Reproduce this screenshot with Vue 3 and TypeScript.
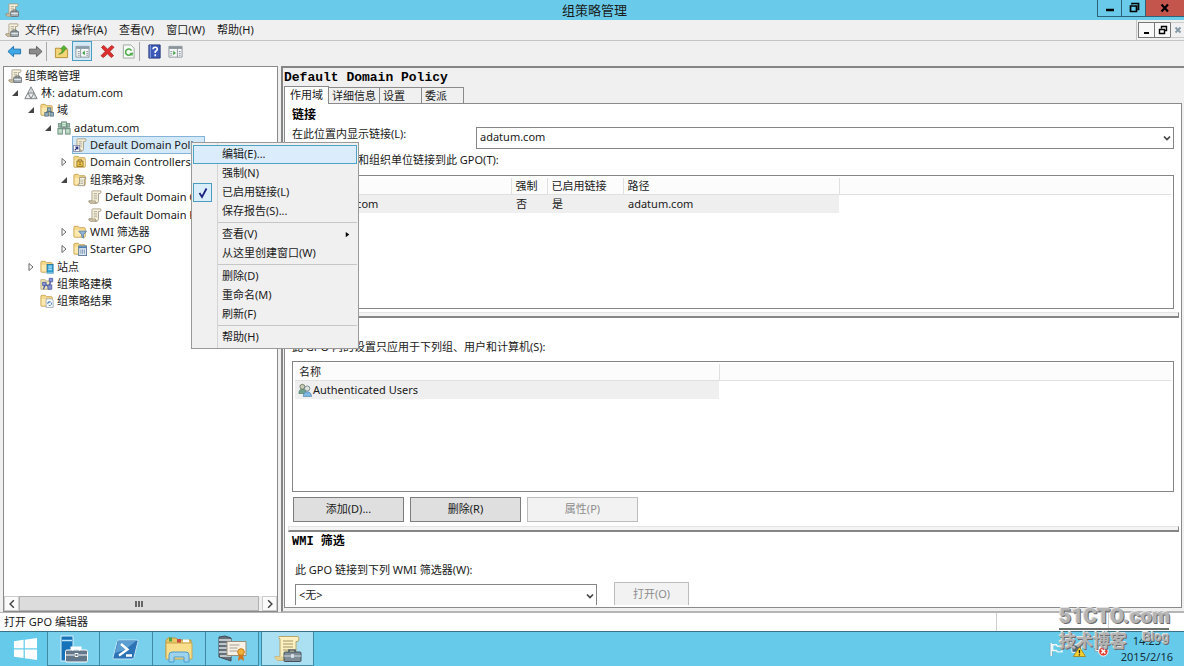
<script setup lang="ts">
import { ref } from 'vue'

interface TreeNode {
  label: string
  icon: string
  level: number
  state?: 'open' | 'closed'
  selected?: boolean
}

interface MenuEntry {
  label?: string
  active?: boolean
  checked?: boolean
  submenu?: boolean
}

const menus = ['文件(F)', '操作(A)', '查看(V)', '窗口(W)', '帮助(H)']

const nodes: TreeNode[] = [
  { label: '组策略管理', icon: 'gpmc', level: 0 },
  { label: '林: adatum.com', icon: 'forest', level: 1, state: 'open' },
  { label: '域', icon: 'domains', level: 2, state: 'open' },
  { label: 'adatum.com', icon: 'domain', level: 3, state: 'open' },
  { label: 'Default Domain Policy', icon: 'link', level: 4, selected: true },
  { label: 'Domain Controllers', icon: 'ou', level: 4, state: 'closed' },
  { label: '组策略对象', icon: 'objects', level: 4, state: 'open' },
  { label: 'Default Domain Controllers Policy', icon: 'scroll', level: 5 },
  { label: 'Default Domain Policy', icon: 'scroll', level: 5 },
  { label: 'WMI 筛选器', icon: 'wmi', level: 4, state: 'closed' },
  { label: 'Starter GPO', icon: 'starter', level: 4, state: 'closed' },
  { label: '站点', icon: 'sites', level: 2, state: 'closed' },
  { label: '组策略建模', icon: 'modeling', level: 2 },
  { label: '组策略结果', icon: 'results', level: 2 },
]

const contextMenu: MenuEntry[] = [
  { label: '编辑(E)...', active: true },
  { label: '强制(N)' },
  { label: '已启用链接(L)', checked: true },
  { label: '保存报告(S)...' },
  {},
  { label: '查看(V)', submenu: true },
  { label: '从这里创建窗口(W)' },
  {},
  { label: '删除(D)' },
  { label: '重命名(M)' },
  { label: '刷新(F)' },
  {},
  { label: '帮助(H)' },
]

const tabs = ['作用域', '详细信息', '设置', '委派']
const activeTab = ref(0)
const linkLocation = ref('adatum.com')
const wmiFilter = ref('<无>')

const taskItems = [
  { id: 'server', name: '服务器管理器' },
  { id: 'shell', name: 'PowerShell' },
  { id: 'explorer', name: '文件资源管理器' },
  { id: 'tools', name: '管理工具' },
  { id: 'policy', name: '组策略管理' },
]
</script>

<template>
  <div class="desktop">
    <svg class="defs" aria-hidden="true">
      <symbol id="scroll" viewBox="0 0 16 16">
        <path d="M5 1h9.500q1 1.500-.5 3H12v8.500q0 2.500-2.500 2.500H3q-2-.5-2-2.500h3.500V3Q4 1.500 5 1z" fill="#f6f0dc" stroke="#a39b84" />
        <path d="M1 12.500h7.500V14q.5 1 1.500 1H3q-2-.5-2-2.500z" fill="#d9cfae" stroke="#968d73" stroke-width=".8" />
        <path d="M6.500 4h4M6.500 6h4M6.500 8h4M6.500 10h4" stroke="#aaa690" stroke-width=".9" />
      </symbol>
      <symbol id="gpmc" viewBox="0 0 16 16">
        <use href="#scroll" />
        <path d="M9 9.500V8h4v1.500" fill="none" stroke="#5f686c" />
        <rect x="6.500" y="9.500" width="9" height="6" rx=".8" fill="#a3acb0" stroke="#666f73" />
        <path d="M7 12h8M11 11v2" stroke="#e8ecee" />
      </symbol>
      <symbol id="forest" viewBox="0 0 16 16">
        <path d="M8 1 15 14.500H1zM4.500 8h7L8 14.500z" fill="#eceeef" stroke="#6d7377" stroke-linejoin="round" />
        <path d="M8 1v7M4.500 8 8 14M11.500 8 13 14" stroke="#9aa0a4" stroke-width=".8" fill="none" />
      </symbol>
      <symbol id="folder" viewBox="0 0 16 16">
        <path d="M1 2.500q0-1 1-1h4l1.500 1.500H13q1 0 1 1V13q0 1-1 1H2q-1 0-1-1z" fill="#f3d88a" stroke="#c29c46" stroke-width=".9" />
        <path d="M2 5.500h11.500V13H2z" fill="#fbe9b0" />
      </symbol>
      <symbol id="domain" viewBox="0 0 16 16">
        <path d="M8 5v5M3.500 10V8h9v2" stroke="#5f6b6b" fill="none" />
        <g fill="#9fc3ae" stroke="#6a8a7e" stroke-width=".9">
          <rect x="5" y="1" width="6" height="6" />
          <rect x="1" y="8.500" width="5.500" height="6.500" />
          <rect x="9.500" y="8.500" width="5.500" height="6.500" />
          <rect x="1.500" y="3" width="3" height="4" />
          <rect x="11.500" y="3" width="3" height="4" />
        </g>
        <path d="M6 3h4M6 5h4M2 10.500h3.500M10.500 10.500h3.500M2 12.500h3.500M10.500 12.500h3.500" stroke="#e2f2e2" />
      </symbol>
      <symbol id="domains" viewBox="0 0 16 16">
        <use href="#folder" />
        <path d="M10.500 8v2M7.500 11.500V10h6v1.500" stroke="#456" fill="none" />
        <g fill="#8eaebf" stroke="#4a6678" stroke-width=".8">
          <rect x="8.500" y="5.500" width="4" height="4" />
          <rect x="5.500" y="11" width="4" height="4" />
          <rect x="11.500" y="11" width="4" height="4" />
        </g>
      </symbol>
      <symbol id="link" viewBox="0 0 16 16">
        <use href="#scroll" />
        <rect x=".5" y="8.500" width="7" height="7" fill="#fff" stroke="#8a8fa8" />
        <path d="M2 14 5 11M2.800 10.500h2.700v2.700" stroke="#24307e" stroke-width="1.300" fill="none" />
      </symbol>
      <symbol id="ou" viewBox="0 0 16 16">
        <use href="#folder" />
        <rect x="4.500" y="7" width="7" height="6" fill="#f4cf52" stroke="#8e6c1e" />
        <path d="M6 7V5.500h4V7M6.500 9h3M6.500 11h3" stroke="#8e6c1e" fill="none" />
      </symbol>
      <symbol id="objects" viewBox="0 0 16 16">
        <use href="#folder" />
        <path d="M7.500 5h7v2H13v7.500H6v-2h1.500z" fill="#f6f2e2" stroke="#8f8a78" stroke-width=".9" />
        <path d="M8.500 8h3M8.500 10h3M8.500 12h3" stroke="#a5a08e" stroke-width=".8" />
      </symbol>
      <symbol id="wmi" viewBox="0 0 16 16">
        <use href="#folder" />
        <path d="M6.500 7h9L12 11.200V15l-2-1.500v-2.300z" fill="#8fb4d4" stroke="#5479a0" stroke-width=".9" />
      </symbol>
      <symbol id="starter" viewBox="0 0 16 16">
        <use href="#folder" />
        <rect x="6.500" y="4.500" width="9" height="11" fill="#dfe9f3" stroke="#55708f" />
        <path d="M6.500 6h9" stroke="#4b7db5" stroke-width="2" />
        <path d="M9 8.500v5M11 8.500v5M13 8.500v5" stroke="#7390af" />
      </symbol>
      <symbol id="sites" viewBox="0 0 16 16">
        <use href="#folder" />
        <rect x="8" y="5" width="7" height="10.500" fill="#2fa0d4" stroke="#14668f" stroke-width=".8" />
        <path d="M9.500 7h4M9.500 9h4M9.500 11h4M6.500 15h9" stroke="#d3f1ff" />
      </symbol>
      <symbol id="modeling" viewBox="0 0 16 16">
        <path d="M1 3h5l1 1.500h5V14H1z" fill="#f2e5b4" stroke="#a99b6d" stroke-width=".8" />
        <path d="M4 14 6 8l4 3 3-8" stroke="#4c5cab" stroke-width="1.500" fill="none" />
        <path d="M3 6h4v4H3zM10.500 1.500h4v4h-4zM9 9h4.500v5H9z" fill="#8795cf" stroke="#3c4d9d" stroke-width=".8" />
      </symbol>
      <symbol id="results" viewBox="0 0 16 16">
        <use href="#folder" />
        <path d="M7 5.500h6l2 2v8H7z" fill="#f8fafc" stroke="#8996a2" stroke-width=".8" />
        <path d="M9 10a2.200 2.200 0 1 1 1 3M9 11.500V9.500h2" stroke="#3b78b5" fill="none" />
      </symbol>
      <symbol id="users" viewBox="0 0 16 16">
        <path d="M1 12q0-5 4-5t4 5z" fill="#6fa38d" stroke="#3f6f5c" stroke-width=".7" />
        <circle cx="5" cy="4.300" r="2.800" fill="#c8ccb5" stroke="#54604c" stroke-width=".8" />
        <path d="M6 15.500q0-5.500 4.500-5.500t5 5.500z" fill="#7db6df" stroke="#3d76a5" stroke-width=".7" />
        <circle cx="10.500" cy="6.300" r="3" fill="#dfe3dd" stroke="#556d79" stroke-width=".8" />
      </symbol>
    </svg>

    <header class="titlebar">
      <svg class="app-icon"><use href="#gpmc" /></svg>
      <h1>组策略管理</h1>
      <div class="caption">
        <button type="button" aria-label="最小化"><svg viewBox="0 0 12 12"><path d="M2 8h8" stroke="#000" stroke-width="2.500" /></svg></button>
        <button type="button" aria-label="还原"><svg viewBox="0 0 12 12"><path d="M4 2.500V1.500h6.500v6H9.500M2.500 4h6v5.500h-6z" fill="none" stroke="#000" stroke-width="1.700" /></svg></button>
        <button type="button" class="close" aria-label="关闭"><svg viewBox="0 0 12 12"><path d="M2.500 2.500 9 9.500M9 2.500 2.500 9.500" stroke="#000" stroke-width="2.200" /></svg></button>
      </div>
    </header>

    <nav class="menubar">
      <svg class="app-icon"><use href="#gpmc" /></svg>
      <button v-for="m in menus" :key="m" type="button">{{ m }}</button>
      <div class="mdi">
        <button type="button" aria-label="最小化子窗口"><svg viewBox="0 0 12 12"><path d="M3 9h5" stroke="#000" stroke-width="2" /></svg></button>
        <button type="button" aria-label="还原子窗口"><svg viewBox="0 0 12 12"><path d="M4.500 4.500v-2H9.500v4H8M2.500 5.500H7.500V9.500h-5z" fill="none" stroke="#000" stroke-width="1.400" /></svg></button>
        <button type="button" class="mdi-close" aria-label="关闭子窗口"><svg viewBox="0 0 12 12"><path d="M3.500 3.500 8.500 8.500M8.500 3.500 3.500 8.500" stroke="#8499a5" stroke-width="1.800" /></svg></button>
      </div>
    </nav>

    <div class="toolbar" role="toolbar" aria-label="工具">
      <button type="button" aria-label="后退"><svg viewBox="0 0 16 16"><path d="M1 8 7 2.500V5.500h7.500v5H7v3z" fill="#3fa9e8" stroke="#1b70ae" stroke-linejoin="round" /></svg></button>
      <button type="button" aria-label="前进"><svg viewBox="0 0 16 16"><path d="M15 8 9 2.500V5.500H1.500v5H9v3z" fill="#8b8b8b" stroke="#5f5f5f" stroke-linejoin="round" /></svg></button>
      <span class="divider"></span>
      <button type="button" aria-label="上一级"><svg viewBox="0 0 16 16"><path d="M1.500 4.500h5L8 6h6.500v8.500h-13z" fill="#f3d578" stroke="#b38f34" /><path d="M5 11q4-1 4-6H7l3.500-3.500L14 5h-2.300Q11 10 5 11z" fill="#56b52f" stroke="#37801c" stroke-width=".6" /></svg></button>
      <button type="button" class="pressed" aria-label="显示控制台树"><svg viewBox="0 0 16 16"><path d="M1 2.500h14v11.500H1z" fill="#f7f9fa" stroke="#8a949b" /><path d="M1 4h14" stroke="#8a9daa" stroke-width="2.500" /><path d="M6 5v9" stroke="#8a949b" /><path d="M3 8h2M3 10h2M3 12h2M12 8h2M12 10h2M12 12h2" stroke="#8a949b" /><path d="M10.500 7v5L7.500 9.500z" fill="#48a54b" /></svg></button>
      <button type="button" class="delete" aria-label="删除"><svg viewBox="0 0 16 16"><path d="M1.500 3.500 4 1.500l4 4 4.500-4L15 3.500 10.500 8l4 4.500L12 14.500 8 10.500 3.500 14.500 1 12.500 5.500 8z" fill="#dc3030" stroke="#a31717" stroke-width=".7" /></svg></button>
      <button type="button" aria-label="刷新"><svg viewBox="0 0 16 16"><path d="M2.500 1h8L14 4.500V15H2.500z" fill="#f7faf6" stroke="#9ba79b" /><path d="M10.800 11A3.400 3.400 0 1 1 11.200 7" fill="none" stroke="#4dab48" stroke-width="1.600" /><path d="m9 9.500 4-.5-1 4z" fill="#4dab48" /></svg></button>
      <span class="divider"></span>
      <button type="button" aria-label="帮助"><svg viewBox="0 0 16 16"><path d="M2 1h12v14H2z" fill="#3c5bb8" stroke="#223879" /><path d="M3.500 1v14" stroke="#8fa5e2" /><path d="M6.500 5.700Q6.500 3.500 8.700 3.500T11 5.600Q11 7 8.800 8V9.500M8.800 11v2" fill="none" stroke="#fff" stroke-width="1.700" /></svg></button>
      <button type="button" aria-label="显示操作窗格"><svg viewBox="0 0 16 16"><path d="M1 2.500h14v11.500H1z" fill="#f7f9fa" stroke="#8a949b" /><path d="M1 4h14" stroke="#8a949b" stroke-width="2.500" /><path d="M10 5v9" stroke="#8a949b" /><path d="M2.500 8h2M2.500 10h2M2.500 12h2M11.500 8h2M11.500 10h2M11.500 12h2" stroke="#8a949b" /><path d="M5.500 7v5l3-2.500z" fill="#48a54b" /></svg></button>
    </div>

    <main class="workspace">
      <section class="tree-pane">
        <ul class="tree" role="tree">
          <li v-for="(n, i) in nodes" :key="i" role="treeitem" :aria-selected="!!n.selected" :class="['level-' + n.level, { selected: n.selected }]">
            <span v-if="n.level > 0" class="twisty">
              <svg v-if="n.state === 'open'" viewBox="0 0 8 8"><path d="M7 1v6H1z" fill="#444" /></svg>
              <svg v-else-if="n.state === 'closed'" viewBox="0 0 8 8"><path d="M2 .5v7L6 4z" fill="#fff" stroke="#666" /></svg>
            </span>
            <span class="node"><svg><use :href="'#' + n.icon" /></svg>{{ n.label }}</span>
          </li>
        </ul>
        <div class="scrollbar">
          <button type="button" aria-label="向左滚动"><svg viewBox="0 0 8 8"><path d="M5.500 1 2.500 4l3 3" fill="none" stroke="#444" stroke-width="1.200" /></svg></button>
          <div class="thumb"><i></i><i></i><i></i></div>
          <button type="button" aria-label="向右滚动"><svg viewBox="0 0 8 8"><path d="m2.500 1 3 3-3 3" fill="none" stroke="#444" stroke-width="1.200" /></svg></button>
        </div>
      </section>

      <section class="details">
        <h2 class="policy-name">Default Domain Policy</h2>
        <div class="tabs" role="tablist">
          <button v-for="(t, i) in tabs" :key="t" type="button" role="tab" :aria-selected="activeTab === i" :class="{ current: activeTab === i }" @click="activeTab = i">{{ t }}</button>
        </div>
        <div class="page" role="tabpanel">
          <div class="page-body">
            <h3>链接</h3>
            <div class="location">
              <label for="location">在此位置内显示链接(L):</label>
              <div class="combo">
                <select id="location" v-model="linkLocation"><option>adatum.com</option></select>
                <svg viewBox="0 0 8 8"><path d="m1 2.500 3 3 3-3" fill="none" stroke="#444" stroke-width="1.700" /></svg>
              </div>
            </div>
            <p class="links-caption">下列站点、域和组织单位链接到此 GPO(T):</p>
            <div class="list links">
              <table>
                <thead>
                  <tr><th class="c-loc">位置</th><th class="c-force">强制</th><th class="c-on">已启用链接</th><th class="c-path">路径</th><th></th></tr>
                </thead>
                <tbody>
                  <tr><td class="item"><svg><use href="#domain" /></svg>adatum.com</td><td>否</td><td>是</td><td>adatum.com</td><td class="rest"></td></tr>
                </tbody>
              </table>
            </div>
            <hr />
            <h3>安全筛选</h3>
            <p class="security-caption">此 GPO 内的设置只应用于下列组、用户和计算机(S):</p>
            <div class="list members">
              <table>
                <thead>
                  <tr><th class="c-name">名称</th><th></th></tr>
                </thead>
                <tbody>
                  <tr><td class="item"><svg><use href="#users" /></svg>Authenticated Users</td><td class="rest"></td></tr>
                </tbody>
              </table>
            </div>
            <div class="actions">
              <button type="button">添加(D)...</button>
              <button type="button">删除(R)</button>
              <button type="button" disabled>属性(P)</button>
            </div>
            <hr />
            <h3>WMI 筛选</h3>
            <label class="wmi-caption" for="wmi-filter">此 GPO 链接到下列 WMI 筛选器(W):</label>
            <div class="wmi-row">
              <div class="combo">
                <select id="wmi-filter" v-model="wmiFilter"><option>&lt;无&gt;</option></select>
                <svg viewBox="0 0 8 8"><path d="m1 2.500 3 3 3-3" fill="none" stroke="#444" stroke-width="1.700" /></svg>
              </div>
              <button type="button" disabled>打开(O)</button>
            </div>
          </div>
        </div>
      </section>
    </main>

    <footer class="statusbar"><span>打开 GPO 编辑器</span><span></span><span></span></footer>

    <div class="taskbar">
      <button type="button" class="start" aria-label="开始"><svg viewBox="0 0 26 24"><path d="M1 4 11 2.500v8.800H1zM12.300 2.300 25 .5v10.800H12.300zM1 12.600h10v8.800L1 20zM12.300 12.600H25v10.900l-12.700-1.800z" fill="#fff" /></svg></button>
      <button v-for="t in taskItems" :key="t.id" type="button" :class="['task', { running: t.id === 'policy' }]" :aria-label="t.name">
        <svg v-if="t.id === 'server'" viewBox="0 0 30 28"><path d="M2 1h12v25H2z" fill="#1673b9" stroke="#d8f2fc" /><path d="M3 5.500h10" stroke="#bfe6fa" stroke-width="1.500" /><path d="M13 15.500V13h8v2.500" fill="none" stroke="#fff" stroke-width="3" /><rect x="6.500" y="15" width="22" height="12" rx="1.500" fill="#62778a" stroke="#fff" /><path d="M13.500 15.500V13.500h7v2M7 20h8m5 0h8M16 18.500h3v3h-3z" stroke="#fff" fill="none" /></svg>
        <svg v-else-if="t.id === 'shell'" viewBox="0 0 30 28"><path d="M8 5h18q1.500 0 1 1.500l-4 16Q22.500 24 21 24H3q-1.500 0-1-1.500l4-16Q6.500 5 8 5z" fill="#2c73b5" stroke="#bfe3f6" /><path d="M7 6h18L14 15 4 18z" fill="#5b9ed2" /><path d="m10 9 6.500 5.500L8 20.500M15 20.500h6" stroke="#fff" stroke-width="2.300" fill="none" /></svg>
        <svg v-else-if="t.id === 'explorer'" viewBox="0 0 30 28"><path d="M2 5.500 4 3h8l2 2h13v17H2z" fill="#e9c765" stroke="#b99642" /><path d="M5 2.500h3v4H5z" fill="#51a544" /><path d="M13 4h4v4h-4z" fill="#cd4b3a" /><path d="M19 4.500h6v3h-6z" fill="#fff" /><path d="M2 8h26v16H2z" fill="#f9df8b" stroke="#c9a64e" /><path d="M5 27v-7q0-3 3-3h14q3 0 3 3v7h-5v-5H10v5z" fill="#9dd3ef" stroke="#4e9cc6" /></svg>
        <svg v-else-if="t.id === 'tools'" viewBox="0 0 30 28"><path d="M2 2 8 1l6 2v23l-6-2-6-2z" fill="#66707a" stroke="#434b52" /><path d="M2 5h12M2 9h12M2 13h12M2 17h12M3 21h11" stroke="#dbe2e7" stroke-width="1.600" /><path d="M10 6.500h19v14H10z" fill="#f6f1e6" stroke="#9a8e78" /><path d="M12.500 10h10M12.500 13h8M12.500 16h8" stroke="#a8a093" /><path d="m22 18-1 8 3-2 3 2-1-8z" fill="#d07722" /><circle cx="24" cy="17" r="3.300" fill="#f2b13b" stroke="#c27c1b" /></svg>
        <svg v-else viewBox="0 0 30 28"><path d="M6 1.500h19q2 2 0 5h-2v16q0 3-3 3H5q-3-1-3-4h5V4q-2-1.500-1-2.500z" fill="#fbf0c1" stroke="#b7a66a" /><path d="M2 21.500h12q0 4 3 4H5q-3-1-3-4z" fill="#e3d293" /><path d="M10 6h10M10 9h10M10 12h10M10 15h6" stroke="#c1b485" stroke-width="1.300" /><path d="M16 17.500V15h6v2.500" fill="none" stroke="#4c5860" stroke-width="1.600" /><rect x="11" y="17" width="17" height="9.500" rx="1" fill="#7d8c97" stroke="#46525b" /><path d="M11 21h17M18.500 19.500h2v3h-2z" stroke="#d8e0e5" fill="#d8e0e5" /></svg>
      </button>
      <div class="tray">
        <svg viewBox="0 0 16 16"><path d="M3.500 1v14" stroke="#5d8798" stroke-width="3" /><path d="M3.500 1v14" stroke="#eef8fc" stroke-width="2" /><path d="M5 3h4l1 1.500h5v6h-5L9 9H5z" fill="none" stroke="#eef8fc" stroke-width="1.500" /></svg>
        <svg viewBox="0 0 16 16"><path d="M1 3h10v8H1z" fill="#47677a" stroke="#fff" /><path d="m9 5 6.500 10.500h-13z" fill="#f7cf2e" stroke="#9c7a10" stroke-width=".8" /><path d="M9 8.500v3.500M9 13v1.300" stroke="#222" stroke-width="1.400" /></svg>
        <svg viewBox="0 0 16 16"><path d="M1 6h3l4-4v12l-4-4H1z" fill="#eef8fc" stroke="#7794a3" stroke-width=".8" /><circle cx="10" cy="10" r="5" fill="#df3c32" stroke="#fff" /><path d="m7.800 7.800 4.400 4.400m0-4.400-4.400 4.400" stroke="#fff" stroke-width="1.600" /></svg>
        <div class="clock"><span>14:23</span><span>2015/2/16</span></div>
      </div>
    </div>

    <div class="context-menu" role="menu">
      <template v-for="(e, i) in contextMenu" :key="i">
        <div v-if="!e.label" class="separator" role="separator"></div>
        <button v-else type="button" :role="e.checked ? 'menuitemcheckbox' : 'menuitem'" :aria-checked="e.checked" :class="{ active: e.active }">
          <span class="gutter"><span v-if="e.checked" class="check"><svg viewBox="0 0 12 12"><path d="m2.500 6 2.500 4L9.500 1.500" fill="none" stroke="#1b2380" stroke-width="1.800" /></svg></span></span>
          <span class="text">{{ e.label }}</span>
          <svg v-if="e.submenu" class="more" viewBox="0 0 8 8"><path d="M2 1v6l4-3z" fill="#000" /></svg>
        </button>
      </template>
    </div>

    <div class="watermark">
      <strong>51CTO.com</strong>
      <div><b>技术博客</b><em>Blog</em></div>
    </div>
  </div>
</template>

<style>
body {
  margin: 0;
}
</style>

<style scoped>
* {
  box-sizing: border-box;
}

.desktop {
  position: relative;
  display: flex;
  flex-direction: column;
  height: 100vh;
  overflow: hidden;
  background: #f0f0f0;
  color: #1a1a1a;
  font-family: "Noto Sans", "Noto Sans CJK SC", sans-serif;
  font-size: 11px;
  line-height: 16px;
}

button,
select {
  margin: 0;
  padding: 0;
  border: 0;
  border-radius: 0;
  background: none;
  color: inherit;
  font: inherit;
  white-space: nowrap;
}

h1,
h2,
h3,
p,
ul {
  margin: 0;
  padding: 0;
}

svg {
  display: block;
  flex: none;
}

.defs {
  position: absolute;
  width: 0;
  height: 0;
}

.app-icon {
  width: 14px;
  height: 14px;
}

.titlebar {
  display: grid;
  grid-template-columns: 1fr auto 1fr;
  align-items: center;
  flex: none;
  height: 20px;
  padding-left: 5px;
  background: #69cbe9;
}

.titlebar h1 {
  font-size: 13px;
  font-weight: 400;
  line-height: 20px;
}

.caption {
  display: flex;
  justify-self: end;
  align-self: start;
  height: 17px;
  border: 1px solid #2c6377;
  border-width: 0 0 1px 1px;
}

.caption button {
  display: grid;
  place-items: center;
  width: 24px;
  border-right: 1px solid #2c6377;
}

.caption .close {
  width: 38px;
  border-right: 0;
  background: #c4554d;
}

.caption svg,
.mdi svg {
  width: 12px;
  height: 12px;
}

.menubar {
  display: flex;
  align-items: center;
  flex: none;
  height: 21px;
  padding-left: 5px;
  border-bottom: 1px solid #c4c4c4;
}

.menubar > button {
  margin: 0 6px;
}

.mdi {
  display: flex;
  align-self: stretch;
  align-items: center;
  margin-left: auto;
  padding-left: 1px;
  border-left: 1px solid #c4c4c4;
}

.mdi button {
  display: grid;
  place-items: center;
  width: 16px;
  height: 16px;
  border: 1px solid #777;
  border-right-width: 0;
  background: #f8f8f8;
}

.mdi .mdi-close {
  width: 14px;
  border-color: #ccc;
  border-left-color: #777;
  background: #f0f0f0;
}

.toolbar {
  display: flex;
  align-items: center;
  gap: 1px;
  flex: none;
  height: 22px;
  margin-bottom: 3px;
  padding: 0 4px 2px;
}

.toolbar button {
  display: grid;
  place-items: center;
  width: 20px;
  height: 20px;
}

.toolbar svg {
  width: 15px;
  height: 15px;
}

.toolbar .pressed {
  border: 1px solid #4a9cc0;
  background: #d4ebf7;
}

.toolbar .delete {
  margin-left: 4px;
}

.divider {
  width: 1px;
  height: 19px;
  margin-right: 3px;
  background: #a8a8a8;
}

.workspace {
  display: grid;
  grid-template-columns: 275px 1fr;
  gap: 3px;
  flex: 1;
  min-height: 0;
  padding-left: 3px;
}

.tree-pane {
  display: flex;
  flex-direction: column;
  min-height: 0;
  overflow: hidden;
  border: 1px solid #8a8a8a;
  background: #fff;
}

.tree {
  display: flex;
  flex-direction: column;
  flex: none;
  height: 243px;
  list-style: none;
}

.tree li {
  display: flex;
  align-items: center;
  flex: 1;
  min-height: 0;
  white-space: nowrap;
}

.level-0 {
  padding-left: 4px;
}

.level-1 {
  padding-left: 6px;
}

.level-2 {
  padding-left: 22px;
}

.level-3 {
  padding-left: 39px;
}

.level-4 {
  padding-left: 55px;
}

.level-5 {
  padding-left: 70px;
}

.twisty {
  width: 14px;
  flex: none;
}

.twisty svg {
  width: 8px;
  height: 8px;
  margin-left: 1px;
}

.node {
  display: flex;
  align-items: center;
  gap: 3px;
}

.node svg {
  width: 14px;
  height: 14px;
}

.selected .node {
  height: 16px;
  outline: 1px solid #86b4d8;
  background: #d3e8f8;
}

.scrollbar {
  display: flex;
  flex: none;
  height: 15px;
  margin-top: auto;
  background: #f0f0f0;
}

.scrollbar button {
  display: grid;
  place-items: center;
  width: 15px;
  border: 1px solid #ccc;
  background: #fafafa;
}

.scrollbar button svg {
  width: 10px;
  height: 10px;
}

.thumb {
  display: flex;
  align-items: center;
  justify-content: center;
  gap: 1px;
  flex: 1;
  margin-right: 3px;
  border: 1px solid #b0b0b0;
  background: #dcdcdc;
}

.thumb i {
  width: 2px;
  height: 6px;
  background: #666;
}

.details {
  display: flex;
  flex-direction: column;
  min-width: 0;
  min-height: 0;
  padding: 1px 2px 3px 1px;
  border-top: 2px solid #858585;
  border-left: 2px solid #858585;
  border-bottom: 1px solid #b5b5b5;
}

.policy-name {
  font-family: "Liberation Mono", "Noto Sans CJK SC", monospace;
  font-size: 13px;
  font-weight: 700;
  line-height: 17px;
  color: #000;
}

.tabs {
  display: flex;
  align-items: flex-end;
  flex: none;
  height: 17px;
}

.tabs button {
  min-width: 42px;
  height: 16px;
  padding: 0 3px;
  border: 1px solid #8a8a8a;
  border-width: 1px 1px 0 0;
  text-align: left;
}

.tabs .current {
  position: relative;
  z-index: 1;
  min-width: 45px;
  height: 18px;
  margin-bottom: -1px;
  padding: 0 5px 2px;
  border-left-width: 1px;
  background: #fff;
}

.page {
  display: flex;
  flex: 1;
  min-height: 0;
  padding-bottom: 2px;
  border: 1px solid #8a8a8a;
  background: #fff;
}

.page-body {
  display: flex;
  flex-direction: column;
  flex: 1;
  min-width: 0;
  overflow: hidden;
  padding: 4px 7px 0;
}

.page-body > * {
  flex: none;
}

h3 {
  font-family: "Liberation Mono", "Noto Sans CJK SC", monospace;
  font-size: 12px;
  font-weight: 700;
  line-height: 16px;
  color: #000;
}

.location {
  display: flex;
  margin-top: 3px;
}

.location label {
  width: 184px;
  line-height: 14px;
}

.combo {
  display: grid;
  align-items: center;
}

.combo select {
  grid-area: 1 / 1;
  width: 100%;
  height: 22px;
  padding: 0 20px 2px 3px;
  border: 1px solid #858585;
  background: #fff;
  appearance: none;
}

.combo svg {
  grid-area: 1 / 1;
  justify-self: end;
  width: 8px;
  height: 8px;
  margin-right: 3px;
  pointer-events: none;
}

.location .combo {
  flex: 1;
}

.links-caption {
  margin-top: 3px;
}

.list {
  overflow: hidden;
  padding: 2px;
  border: 1px solid #858585;
}

.links {
  height: 134px;
  margin-top: 7px;
}

.members {
  height: 131px;
  margin-top: 6px;
}

.list table {
  width: 100%;
  border-collapse: collapse;
  table-layout: fixed;
}

.list th {
  height: 16px;
  padding: 0 4px;
  border: 1px solid #e0e0e0;
  border-width: 0 1px 1px 0;
  background: #fcfcfc;
  font-weight: 400;
  line-height: 15px;
  text-align: left;
}

.list th:last-child {
  border-right: 0;
}

.list td {
  height: 18px;
  padding: 0 5px;
  background: #efefef;
  line-height: 18px;
}

.list .rest {
  background: #fff;
}

.list .item {
  padding-left: 3px;
}

.item svg {
  float: left;
  width: 14px;
  height: 14px;
  margin: 2px 1px 0 0;
}

.c-loc {
  width: 216px;
}

.c-force {
  width: 36px;
}

.c-on {
  width: 76px;
}

.c-path {
  width: 216px;
}

.c-name {
  width: 424px;
}

hr {
  width: auto;
  height: 6px;
  margin: 3px -5px 2px -4px;
  border: 1px solid #e4e4e4;
  border-right: 1px solid #858585;
  border-bottom: 2px solid #858585;
  background: #f4f4f4;
}

.security-caption {
  margin-top: 3px;
}

.actions {
  display: flex;
  gap: 6px;
  margin: 5px 0 1px 1px;
}

.actions button,
.wmi-row button {
  width: 111px;
  height: 25px;
  padding-bottom: 2px;
  border: 1px solid #7d7d7d;
  background: #dfdfdf;
}

.actions button:disabled,
.wmi-row button:disabled {
  border-color: #bdbdbd;
  background: #f2f2f2;
  color: #8c8c8c;
}

.wmi-caption {
  margin: 12px 0 4px 3px;
}

.wmi-row {
  display: flex;
  align-items: flex-end;
  gap: 17px;
  margin-left: 3px;
}

.wmi-row .combo {
  width: 302px;
}

.wmi-row .combo select {
  height: 24px;
}

.wmi-row button {
  width: 75px;
  height: 26px;
}

.statusbar {
  display: grid;
  grid-template-columns: 1fr 112px 76px;
  flex: none;
  height: 19px;
  padding-left: 3px;
  border-top: 1px solid #b5b5b5;
  background: #fff;
  line-height: 18px;
}

.statusbar span + span {
  border-left: 1px solid #d0d0d0;
}

.statusbar span {
  padding-left: 1px;
}

.taskbar {
  display: flex;
  flex: none;
  height: 35px;
  padding-left: 3px;
  border-top: 1px solid #3b7185;
  background: #66cbea;
}

.taskbar button {
  display: grid;
  place-items: center;
}

.start {
  width: 44px;
}

.start svg {
  width: 25px;
  height: 24px;
}

.task {
  width: 53px;
  border: 1px solid #3f89a3;
  border-width: 0 1px 1px 0;
  background: #78d0ec;
}

.start + .task {
  border-left-width: 1px;
}

.task.running {
  margin-left: 2px;
  border-left-width: 1px;
  background: #abe0f2;
}

.task svg {
  width: 30px;
  height: 28px;
}

.tray {
  display: flex;
  align-items: center;
  gap: 8px;
  margin-left: auto;
  padding-right: 11px;
  color: #13313d;
}

.tray svg {
  width: 15px;
  height: 15px;
}

.clock {
  display: flex;
  flex-direction: column;
  align-items: center;
  margin-left: 4px;
}

.context-menu {
  position: absolute;
  top: 142px;
  left: 191px;
  width: 168px;
  padding: 2px 1px 1px;
  border: 1px solid #9a9a9a;
  background: linear-gradient(to right, #f0f0f0 25px, #d4d4d4 25px, #d4d4d4 26px, #f0f0f0 26px);
}

.context-menu button {
  display: flex;
  align-items: center;
  width: 100%;
  height: 19px;
  text-align: left;
}

.context-menu .active {
  outline: 1px solid #4ea3c4;
  outline-offset: -1px;
  background: #dbedfd;
}

.gutter {
  width: 29px;
  flex: none;
}

.check {
  display: grid;
  place-items: center;
  width: 19px;
  height: 19px;
  border: 1px solid #4a9cc0;
  background: #d9edfb;
}

.check svg {
  width: 12px;
  height: 12px;
}

.text {
  flex: 1;
  padding-bottom: 2px;
}

.more {
  width: 7px;
  height: 7px;
  margin-right: 6px;
}

.separator {
  height: 4px;
  margin-left: 25px;
  background: linear-gradient(#c6c6c6, #c6c6c6) 0 1px / 100% 1px no-repeat;
}

.watermark {
  position: absolute;
  right: 15px;
  bottom: 14px;
  width: 110px;
  color: #b4b4b4;
  text-shadow: 1px 1px 0 #6c6c6c, -1px -1px 0 #e2e2e2;
  pointer-events: none;
}

.watermark strong {
  display: block;
  border-bottom: 2px solid #6f6f6f;
  font-family: Roboto, "Liberation Sans", sans-serif;
  font-size: 21px;
  font-weight: 900;
  line-height: 24px;
}

.watermark div {
  display: flex;
  justify-content: space-between;
}

.watermark b {
  font-size: 17px;
  line-height: 22px;
}

.watermark em {
  font-family: "Liberation Sans", sans-serif;
  font-size: 12px;
  font-style: normal;
  font-weight: 700;
  line-height: 14px;
}
</style>
